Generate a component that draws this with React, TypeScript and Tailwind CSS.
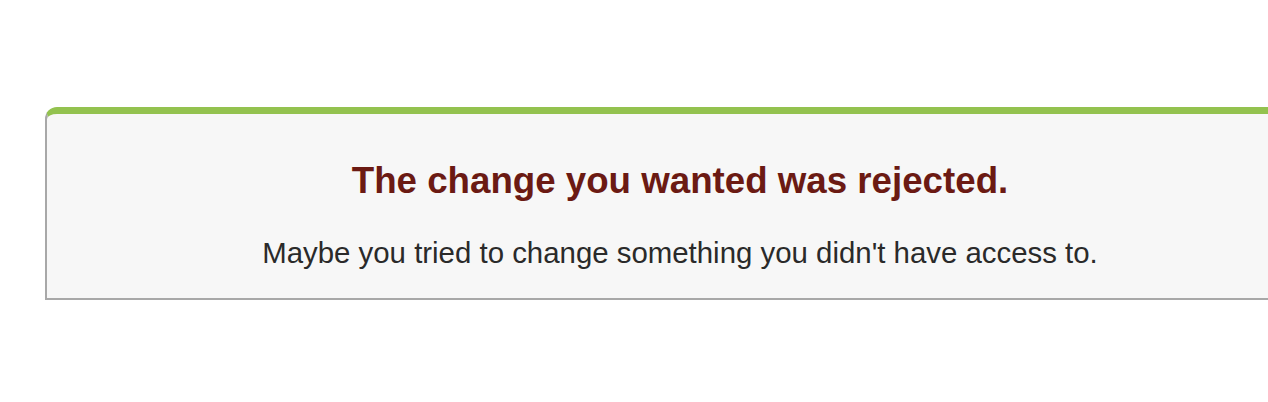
import React from 'react';

export default function App() {
  return (
    <div className="h-[402px] w-[1268px] overflow-hidden bg-white pt-[107px] font-['Liberation_Sans',Arial,sans-serif]">
      <div className="ml-[45px] w-[1268px] rounded-tl-[12px] border-t-[7px] border-l-[2px] border-b-[2px] border-t-[#93c24f] border-l-[#a8a8a8] border-b-[#a8a8a8] bg-[#f7f7f7] pt-[46px] pb-[29px] text-center">
        <h1 className="text-[36.7px] font-bold leading-[41px] text-[#6b1a13]">
          The change you wanted was rejected.
        </h1>
        <p className="mt-[35px] text-[29.4px] leading-[33px] text-[#2a2a2a]">
          Maybe you tried to change something you didn't have access to.
        </p>
      </div>
    </div>
  );
}
